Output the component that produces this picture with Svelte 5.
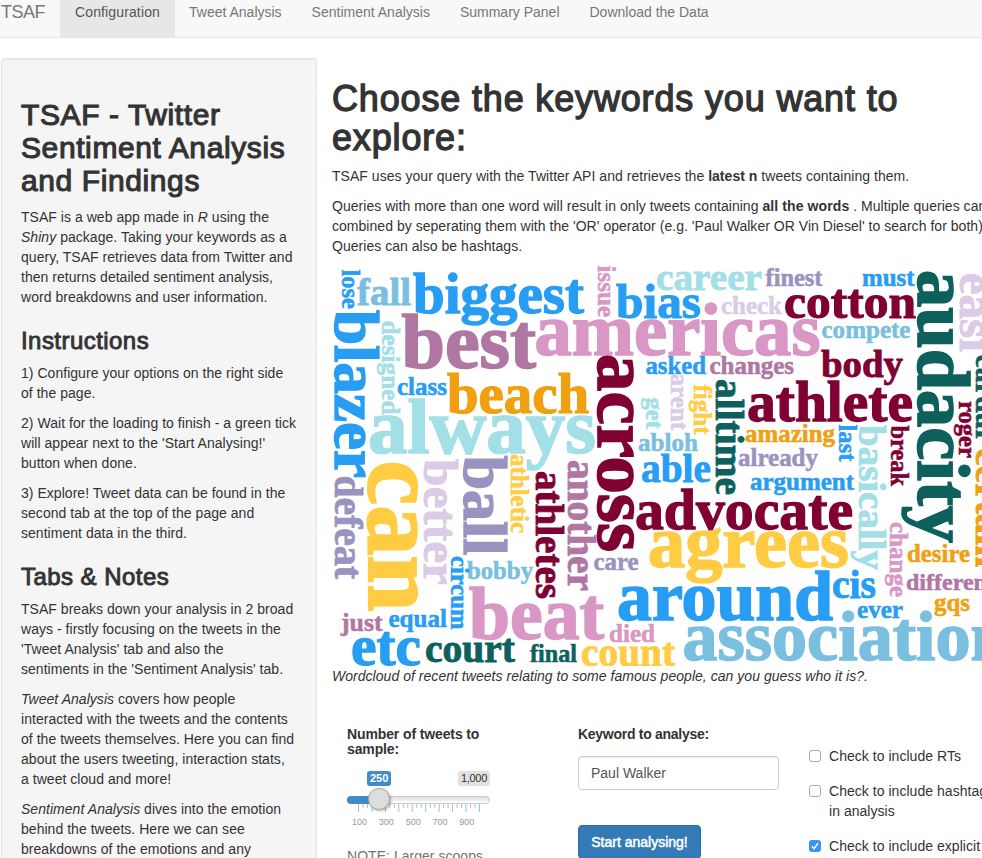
<script>
  const tabs = ['Configuration', 'Tweet Analysis', 'Sentiment Analysis', 'Summary Panel', 'Download the Data'];

  const blue = '#279df3', sky = '#7abfe0', aqua = '#a2dfe6', lilac = '#dccbe7', violet = '#9a93c0';
  const pink = '#d997c5', mauve = '#b077a3', wine = '#800033', teal = '#0e605c', gold = '#ffcc44', amber = '#f0a010';

  // word, start x, baseline y, drawn length, colour
  const across = [
    ['fall', 357, 305, 54, sky], ['biggest', 413, 312.5, 171, blue], ['bias', 616, 317.5, 85, blue],
    ['career', 656, 289.5, 106, aqua], ['finest', 765.5, 286, 57, violet], ['must', 862, 286, 52.5, blue],
    ['check', 721, 314, 61, lilac], ['cotton', 784, 317.5, 132, wine], ['americas', 534.5, 354.5, 286, pink],
    ['best', 401.5, 368, 134.5, mauve], ['compete', 821.5, 338, 89, sky], ['asked', 645.5, 374.2, 60.5, blue],
    ['changes', 709.5, 374.2, 84.5, mauve], ['body', 821, 377, 82, wine], ['class', 397, 394.5, 50, blue],
    ['beach', 447, 413, 142, amber], ['athlete', 747, 420.5, 166, wine], ['always', 368, 452.5, 228, aqua],
    ['amazing', 745, 442, 90, amber], ['abloh', 638, 450.5, 60, sky], ['already', 738, 466, 80, violet],
    ['argument', 750, 490.3, 104, blue], ['able', 641, 481.7, 70, blue], ['advocate', 635, 528.7, 218, wine],
    ['agrees', 648, 566.5, 201, gold], ['care', 593.5, 570.3, 45, violet], ['around', 617, 620, 216, blue],
    ['bobby', 467, 578.5, 66, sky], ['beat', 469, 639, 135, pink], ['just', 341, 630.5, 41.5, mauve],
    ['equal', 388.5, 626.5, 58.5, blue], ['etc', 351, 664.5, 70, blue], ['court', 425, 661.7, 90, teal],
    ['final', 530, 662, 47, teal], ['count', 581, 665.5, 94, gold], ['died', 609, 642, 46, pink],
    ['association', 682.5, 660, 327, sky], ['cis', 832, 597.7, 44, blue], ['ever', 857, 617.5, 46, blue],
    ['desire', 907, 562, 63, amber], ['different', 906, 590, 89, mauve], ['gqs', 934, 611.3, 36, amber]
  ];

  // word, baseline x, start y, drawn length, colour
  const down = [
    ['lose', 342, 269.5, 39.5, blue], ['blazer', 335, 310, 168, blue], ['designed', 382, 320.5, 94, aqua],
    ['issue', 598, 265.5, 51.5, pink], ['across', 598, 354, 198, wine], ['get', 646, 397.5, 31.5, aqua],
    ['arent', 670.5, 373.5, 56.5, lilac], ['fight', 694, 384.5, 50, gold], ['alltime', 716, 379, 116, teal],
    ['audacity', 918, 270, 273, teal], ['easi', 959.5, 272.5, 79.5, lilac], ['last', 838.5, 424.5, 37, blue],
    ['basically', 859, 425, 145, aqua], ['break', 890.5, 425.5, 60.5, wine], ['roger', 959, 401, 57, wine],
    ['cardur', 976, 354.5, 88, teal], ['certain', 976, 448, 119, amber], ['defeat', 335, 475.5, 103.5, violet],
    ['can', 369, 460.5, 151, gold], ['better', 423.5, 459, 126, lilac], ['ball', 463.5, 455.5, 100, violet],
    ['athletic', 510.5, 454, 79, gold], ['athletes', 535.5, 471, 128, wine], ['another', 567.5, 460, 131, mauve],
    ['circum', 450.5, 556, 73.5, blue], ['change', 890, 522, 75, pink]
  ];

  // glyph advances of the bold serif face, in thousandths of an em
  const advance = { a: 500, b: 556, c: 444, d: 556, e: 444, f: 333, g: 500, h: 556, i: 278, j: 333, k: 556, l: 278, m: 833, n: 556, o: 500, p: 556, q: 556, r: 444, s: 389, t: 333, u: 556, v: 500, w: 722, x: 500, y: 500, z: 444 };
  const sizeFor = (word, length) => (length * 1000) / [...word].reduce((sum, c) => sum + advance[c], 0);

  const ticks = Array.from({ length: 28 }, (_, i) => ({ x: 11.5 + i * 4.48, major: i % 3 === 0 }));
</script>

<div class="page">
  <nav>
    <span class="brand">TSAF</span>
    {#each tabs as tab, i}
      <a href="#tab" class:active={i === 0}>{tab}</a>
    {/each}
  </nav>

  <div class="columns">
    <aside>
      <h2>TSAF - Twitter<br />Sentiment Analysis<br />and Findings</h2>
      <p>TSAF is a web app made in <em>R</em> using the<br /><em>Shiny</em> package. Taking your keywords as a<br />query, TSAF retrieves data from Twitter and<br />then returns detailed sentiment analysis,<br />word breakdowns and user information.</p>
      <h3>Instructions</h3>
      <p>1) Configure your options on the right side<br />of the page.</p>
      <p>2) Wait for the loading to finish - a green tick<br />will appear next to the 'Start Analysing!'<br />button when done.</p>
      <p>3) Explore! Tweet data can be found in the<br />second tab at the top of the page and<br />sentiment data in the third.</p>
      <h3>Tabs &amp; Notes</h3>
      <p>TSAF breaks down your analysis in 2 broad<br />ways - firstly focusing on the tweets in the<br />'Tweet Analysis' tab and also the<br />sentiments in the 'Sentiment Analysis' tab.</p>
      <p><em>Tweet Analysis</em> covers how people<br />interacted with the tweets and the contents<br />of the tweets themselves. Here you can find<br />about the users tweeting, interaction stats,<br />a tweet cloud and more!</p>
      <p><em>Sentiment Analysis</em> dives into the emotion<br />behind the tweets. Here we can see<br />breakdowns of the emotions and any</p>
    </aside>

    <main>
      <h1>Choose the keywords you want to<br />explore:</h1>
      <p>TSAF uses your query with the Twitter API and retrieves the <b>latest n</b> tweets containing them.</p>
      <p class="last">Queries with more than one word will result in only tweets containing <b>all the words</b> . Multiple queries can be<br />combined by seperating them with the 'OR' operator (e.g. 'Paul Walker OR Vin Diesel' to search for both).<br />Queries can also be hashtags.</p>
      <svg class="cloud" width="650" height="410" viewBox="332 256 650 410">
        {#each across as [word, x, y, length, fill]}
          <text {x} {y} {fill} stroke={fill} font-size={sizeFor(word, length)} textLength={length} lengthAdjust="spacingAndGlyphs">{word}</text>
        {/each}
        {#each down as [word, x, y, length, fill]}
          <text transform="translate({x} {y}) rotate(90)" {fill} stroke={fill} font-size={sizeFor(word, length)} textLength={length} lengthAdjust="spacingAndGlyphs">{word}</text>
        {/each}
      </svg>
      <p class="caption"><em>Wordcloud of recent tweets relating to some famous people, can you guess who it is?.</em></p>

      <div class="controls">
        <section class="sample">
          <label for="slider">Number of tweets to<br />sample:</label>
          <div class="slider" id="slider">
            <div class="values"><span class="current">250</span><span class="max">1,000</span></div>
            <div class="track"><div class="fill"></div><div class="knob"></div></div>
            <svg class="ticks" width="143" height="13">
              {#each ticks as t}
                <line x1={t.x} x2={t.x} y1="0" y2={t.major ? 8 : 4} stroke={t.major ? '#94c3e6' : '#bbb'} />
              {/each}
            </svg>
            <div class="scale"><span>100</span><span>300</span><span>500</span><span>700</span><span>900</span></div>
          </div>
          <div class="note">NOTE: Larger scoops</div>
        </section>
        <section class="keyword">
          <label for="kw">Keyword to analyse:</label>
          <input id="kw" type="text" value="Paul Walker" />
          <button>Start analysing!</button>
        </section>
        <section class="checks">
          <div class="check"><i></i><span>Check to include RTs</span></div>
          <div class="check"><i></i><span>Check to include hashtags<br />in analysis</span></div>
          <div class="check">
            <i class="on"><svg width="12" height="12" viewBox="0 0 12 12"><path d="M3 6.4 5 8.6 9 3.2" fill="none" stroke="#fff" stroke-width="1.5" /></svg></i>
            <span>Check to include explicit</span>
          </div>
        </section>
      </div>
    </main>
  </div>
</div>

<style>
  :global(body) { margin: 0; overflow: hidden; }
  .page { width: 982px; height: 858px; overflow: hidden; background: #fff; color: #333; font: 14px/20px "Liberation Sans", Arial, sans-serif; letter-spacing: 0.035px; white-space: nowrap; }
  .page * { box-sizing: border-box; }
  nav { display: flex; height: 38px; background: #f8f8f8; border-bottom: 1px solid #e7e7e7; color: #777; letter-spacing: 0; }
  .brand { width: 60px; padding-left: 1px; font-size: 18px; line-height: 24px; letter-spacing: -0.5px; }
  nav a { padding: 2px 15px 0; height: 37px; color: #777; text-decoration: none; }
  nav a.active { width: 115px; margin-right: -1px; background: #e7e7e7; color: #555; letter-spacing: 0.13px; }
  .columns { display: flex; margin-top: 20px; }
  aside { flex: none; width: 316px; height: 830px; margin-left: 1px; padding: 39px 19px 0; background: #f5f5f5; border: 1px solid #e3e3e3; border-radius: 4px; box-shadow: inset 0 1px 1px rgba(0, 0, 0, 0.05); }
  h1, h2, h3 { margin: 0; font-weight: 400; -webkit-text-stroke: 1.1px #333; }
  h1 { height: 79px; padding-top: 1px; font-size: 36px; line-height: 39px; margin: 20px 0 9px; letter-spacing: 0.84px; -webkit-text-stroke-width: 1.3px; }
  h2 { font-size: 30px; line-height: 33px; margin-bottom: 10px; letter-spacing: 0.6px; }
  h3 { font-size: 24px; line-height: 26px; margin: 20px 0 10px; padding-top: 1px; height: 26px; letter-spacing: 0.45px; -webkit-text-stroke-width: 0.9px; }
  p { margin: 0 0 10px; }
  main { flex: none; width: 650px; margin-left: 15px; overflow: hidden; }
  .last { margin: 0; }
  .last b { letter-spacing: 0.1px; }
  .cloud { display: block; }
  .cloud text { font-family: "Liberation Serif", "Times New Roman", serif; font-weight: 700; letter-spacing: 0; stroke-width: 0.022em; }
  .caption { margin: 0; }
  .controls { display: flex; margin-top: 41px; }
  label { display: block; font-weight: 700; line-height: 15px; letter-spacing: -0.12px; }
  .keyword label { letter-spacing: -0.28px; }
  .sample { flex: none; width: 231px; padding-left: 15px; }
  .slider { width: 143px; margin-top: 14px; letter-spacing: 0; }
  .values { display: flex; justify-content: space-between; padding-left: 20px; height: 16px; font-size: 11px; line-height: 15px; }
  .values span { height: 15px; border-radius: 3px; padding: 0 3px; }
  .current { background: #428bca; color: #fff; font-weight: 700; }
  .max { background: #e1e1e1; letter-spacing: -0.3px; }
  .track { position: relative; height: 8px; margin-top: 9px; border: 1px solid #ccc; border-radius: 8px; background: linear-gradient(#ddd, #fff); }
  .fill { width: 30px; height: 8px; margin: -1px; border-radius: 8px 0 0 8px; background: #428bca; }
  .knob { position: absolute; left: 20px; top: -9px; width: 22px; height: 22px; border: 1px solid #aaa; border-radius: 50%; background: #ddd; box-shadow: 1px 1px 3px rgba(0, 0, 0, 0.3); }
  .ticks { display: block; }
  .scale { display: flex; gap: 11.8px; padding-left: 5px; color: #999; font-size: 9px; line-height: 10px; }
  .note { margin-top: 19px; color: #737373; }
  .keyword { flex: none; width: 231px; padding-left: 15px; }
  input { display: block; width: 201px; height: 34px; margin-top: 14px; padding: 6px 12px; border: 1px solid #ccc; border-radius: 4px; color: #555; font: inherit; box-shadow: inset 0 1px 1px rgba(0, 0, 0, 0.075); }
  button { display: block; width: 123px; height: 34px; margin-top: 35px; padding: 0; border: 1px solid #2e6da4; border-radius: 4px; background: #337ab7; color: #fff; font: 14px/20px "Liberation Sans", Arial, sans-serif; -webkit-text-stroke: 0.5px #fff; }
  .checks { flex: none; padding: 19px 0 0 15px; }
  .check { display: flex; margin-bottom: 15px; }
  .check i { width: 12px; height: 12px; margin: 4px 8px 0 0; border: 1px solid #aaa; border-radius: 3px; }
  .check i.on { border: 0; background: #3b92fb; }
  .check i svg { display: block; }
</style>
